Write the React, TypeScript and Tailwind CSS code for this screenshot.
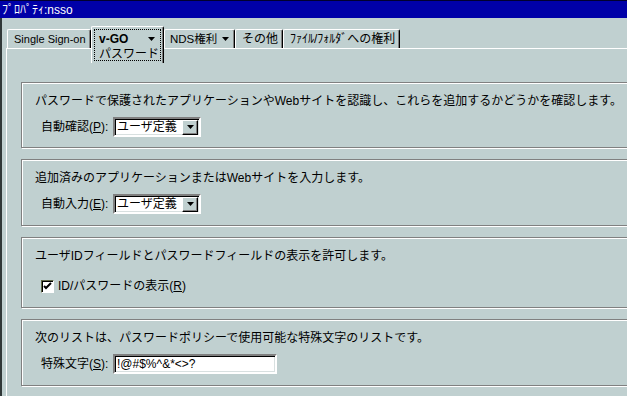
import React from 'react'

const Arrow = () => (
  <svg width="7" height="4" viewBox="0 0 7 4" className="block shrink-0">
    <path d="M0 0h7L3.5 4z" fill="#000" />
  </svg>
)

const Tab = ({ children, className = '' }: { children: React.ReactNode; className?: string }) => (
  <div
    className={`shrink-0 whitespace-nowrap h-[19px] flex items-center border-t border-l border-white border-r border-r-black shadow-[inset_-1px_0_0_#808080] rounded-tl-[2px] rounded-tr-[2px] ${className}`}
  >
    {children}
  </div>
)

const GroupBox = ({ children, className = '' }: { children: React.ReactNode; className?: string }) => (
  <div
    className={`shrink-0 w-[640px] border border-[#808080] shadow-[inset_1px_1px_0_#fff,1px_1px_0_#fff] pl-[13px] pt-[10px] whitespace-nowrap ${className}`}
  >
    {children}
  </div>
)

const Combo = ({ value }: { value: string }) => (
  <div className="w-[88px] h-[20px] bg-white border-2 border-t-[#808080] border-l-[#808080] border-b-white border-r-white shadow-[inset_1px_1px_0_#000,inset_-1px_-1px_0_#d8e0e0] flex items-center justify-between pl-[2px] pr-[1px]">
    <span className="text-[12px]">{value}</span>
    <div className="w-[16px] h-[15px] bg-[#c0d0d0] border border-t-white border-l-white border-b-black border-r-black shadow-[inset_-1px_-1px_0_#808080] flex items-center justify-center">
      <Arrow />
    </div>
  </div>
)

export default function App() {
  return (
    <div className="w-[627px] h-[396px] overflow-hidden bg-[#c0d0d0] text-black text-[12px] leading-[16px] font-['Liberation_Sans','Noto_Sans_CJK_JP',sans-serif]">
      {/* Title bar */}
      <div className="h-[18px] bg-[#0000a8] border-t border-[#000030] flex items-center pl-[2px] text-white text-[12px]">
        ﾌﾟﾛﾊﾟﾃｨ:nsso
      </div>

      <div className="h-[378px] border-l-2 border-[#303838] pt-[9px]">
        {/* Tabs */}
        <div className="flex items-end h-[21px] pl-[5px]">
          <Tab className="w-[84px] pl-[6px] text-[11px]">Single Sign-on</Tab>
          <div className="shrink-0 whitespace-nowrap relative z-10 w-[73px] h-[37px] mb-[-15px] bg-[#c0d0d0] border-t border-l border-white border-r border-r-black shadow-[inset_-1px_0_0_#808080] rounded-tl-[2px] rounded-tr-[2px] p-[2px]">
            <div className="h-full border border-dotted border-black pl-[4px] pr-[5px] pt-[2px]">
              <div className="flex items-center justify-between h-[14px]">
                <span className="font-bold text-[12px]">v-GO</span>
                <Arrow />
              </div>
              <div className="mt-[1px] h-[14px] flex items-center">パスワード</div>
            </div>
          </div>
          <Tab className="w-[71px] pl-[5px] pr-[5px]">
            <span className="text-[11.5px]">NDS権利</span>
            <span className="ml-auto">
              <Arrow />
            </span>
          </Tab>
          <Tab className="w-[48px] pl-[6px]">その他</Tab>
          <Tab className="w-[117px] pl-[6px]">ﾌｧｲﾙ/ﾌｫﾙﾀﾞへの権利</Tab>
        </div>

        {/* Panel */}
        <div className="ml-[4px] border-t border-l border-white h-[400px] pl-[14px] pt-[33px] flex flex-col gap-[11px]">
          <GroupBox className="h-[66px]">
            <div>パスワードで保護されたアプリケーションやWebサイトを認識し、これらを追加するかどうかを確認します。</div>
            <div className="mt-[8px] flex items-center pl-[6px]">
              <span className="w-[72px]">
                自動確認(<u>P</u>):
              </span>
              <Combo value="ユーザ定義" />
            </div>
          </GroupBox>

          <GroupBox className="h-[67px]">
            <div>追加済みのアプリケーションまたはWebサイトを入力します。</div>
            <div className="mt-[8px] flex items-center pl-[6px]">
              <span className="w-[72px]">
                自動入力(<u>E</u>):
              </span>
              <Combo value="ユーザ定義" />
            </div>
          </GroupBox>

          <GroupBox className="h-[71px]">
            <div>ユーザIDフィールドとパスワードフィールドの表示を許可します。</div>
            <div className="mt-[14px] flex items-center pl-[6px] gap-[4px]">
              <div className="w-[13px] h-[13px] bg-white border border-t-[#606848] border-l-[#606848] border-b-white border-r-white shadow-[inset_1px_1px_0_#000] flex items-center justify-center">
                <svg width="9" height="9" viewBox="0 0 9 9">
                  <path d="M1 4l2 2 5-5" stroke="#000" strokeWidth="2" fill="none" />
                </svg>
              </div>
              <span>
                ID/パスワードの表示(<u>R</u>)
              </span>
            </div>
          </GroupBox>

          <GroupBox className="h-[67px]">
            <div>次のリストは、パスワードポリシーで使用可能な特殊文字のリストです。</div>
            <div className="mt-[8px] flex items-center pl-[6px]">
              <span className="w-[72px]">
                特殊文字(<u>S</u>):
              </span>
              <div className="w-[164px] h-[20px] bg-white border-2 border-t-[#808080] border-l-[#808080] border-b-white border-r-white shadow-[inset_1px_1px_0_#000,inset_-1px_-1px_0_#d8e0e0] flex items-center pl-[2px]">
                !@#$%^&amp;*&lt;&gt;?
              </div>
            </div>
          </GroupBox>
        </div>
      </div>
    </div>
  )
}
